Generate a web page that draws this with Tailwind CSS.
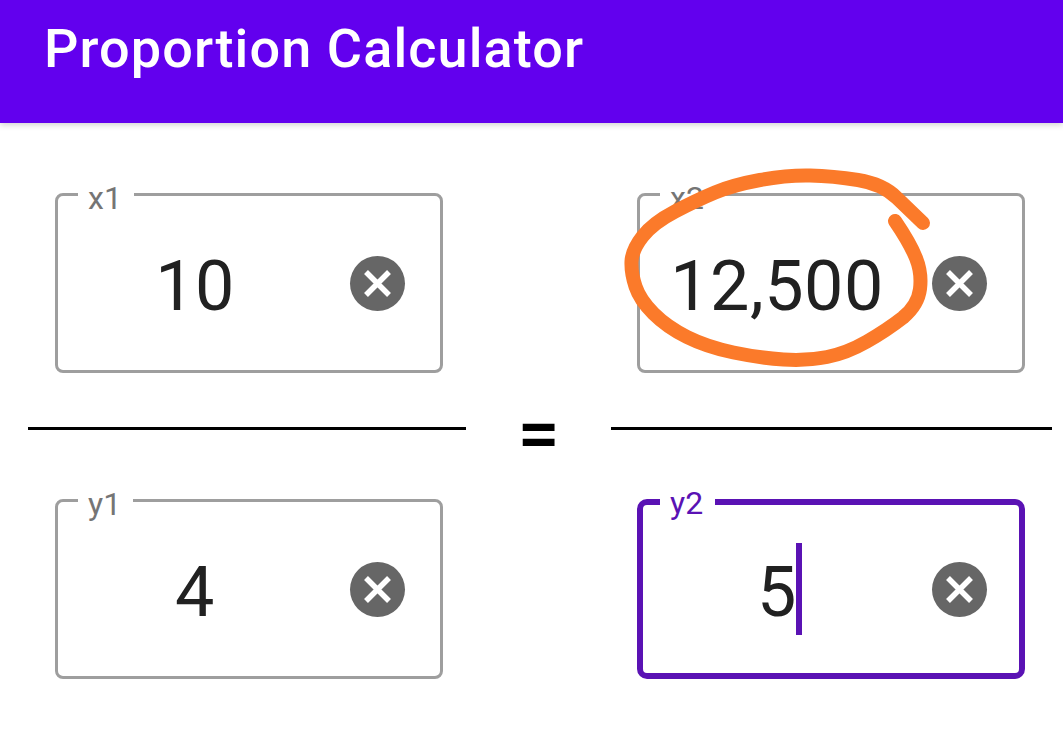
<!DOCTYPE html>
<html lang="en">
<head>
  <meta charset="UTF-8">
  <meta name="viewport" content="width=device-width, initial-scale=1.0">
  <title>Proportion Calculator</title>
  <script src="https://cdn.jsdelivr.net/npm/@tailwindcss/browser@4"></script>
</head>
<body class="bg-white font-['Roboto',sans-serif] overflow-hidden">
  <div class="relative w-[1063px] h-[756px] overflow-hidden">
    <header class="h-[123px] bg-[#6200ee] text-white flex items-center pl-[44px] pb-[25px] shadow-[0_2px_6px_rgba(0,0,0,0.18)]">
      <h1 class="text-[54px] leading-none font-medium tracking-[1.1px]">Proportion Calculator</h1>
    </header>

    <main class="grid grid-cols-[438px_145px_441px] pl-[28px] pt-[70px]">
      <!-- x1 -->
      <div class="pl-[27px]">
        <div class="relative w-[388px] h-[180px] border-[3px] border-[#9e9e9e] rounded-[8px] flex items-center">
          <span class="absolute left-[20px] top-[-13px] bg-white pl-[10px] pr-[12px] text-[32px] leading-[30px] text-[#757575]">x1</span>
          <div class="w-[274px] text-center text-[70px] tracking-[0.5px] leading-none text-[#212121] pt-[6px]">10</div>
          <button class="ml-[18px] w-[55px] h-[55px] rounded-full bg-[#666666] flex items-center justify-center">
            <svg width="29" height="29" viewBox="0 0 29 29" fill="none" stroke="white" stroke-width="5.5"><path d="M3 3 26 26M26 3 3 26"/></svg>
          </button>
        </div>
      </div>
      <div></div>
      <!-- x2 -->
      <div class="pl-[26px]">
        <div class="relative w-[388px] h-[180px] border-[3px] border-[#9e9e9e] rounded-[8px] flex items-center">
          <span class="absolute left-[20px] top-[-13px] bg-white pl-[10px] pr-[12px] text-[32px] leading-[30px] text-[#757575]">x2</span>
          <div class="w-[274px] text-center text-[70px] tracking-[0.5px] leading-none text-[#212121] pt-[6px]">12,500</div>
          <button class="ml-[18px] w-[55px] h-[55px] rounded-full bg-[#666666] flex items-center justify-center">
            <svg width="29" height="29" viewBox="0 0 29 29" fill="none" stroke="white" stroke-width="5.5"><path d="M3 3 26 26M26 3 3 26"/></svg>
          </button>
        </div>
      </div>

      <!-- fraction lines -->
      <div class="h-[3px] bg-black mt-[54px]"></div>
      <div class="mt-[54px] h-[3px] flex items-center justify-center">
        <span class="text-[75px] leading-none font-medium text-black pt-[9px]">=</span>
      </div>
      <div class="h-[3px] bg-black mt-[54px]"></div>

      <!-- y1 -->
      <div class="pl-[27px] mt-[69px]">
        <div class="relative w-[388px] h-[180px] border-[3px] border-[#9e9e9e] rounded-[8px] flex items-center">
          <span class="absolute left-[20px] top-[-13px] bg-white pl-[10px] pr-[12px] text-[32px] leading-[30px] text-[#757575]">y1</span>
          <div class="w-[274px] text-center text-[70px] tracking-[0.5px] leading-none text-[#212121] pt-[6px]">4</div>
          <button class="ml-[18px] w-[55px] h-[55px] rounded-full bg-[#666666] flex items-center justify-center">
            <svg width="29" height="29" viewBox="0 0 29 29" fill="none" stroke="white" stroke-width="5.5"><path d="M3 3 26 26M26 3 3 26"/></svg>
          </button>
        </div>
      </div>
      <div></div>
      <!-- y2, focused -->
      <div class="pl-[26px] mt-[69px]">
        <div class="relative w-[388px] h-[180px] border-[6px] border-[#5a12b4] rounded-[10px] flex items-center">
          <span class="absolute left-[17px] top-[-17px] bg-white pl-[10px] pr-[12px] text-[32px] leading-[30px] text-[#5a12b4]">y2</span>
          <div class="w-[268px] text-center text-[70px] tracking-[0.5px] leading-none text-[#212121] pt-[6px]">
            <span class="relative">5<span class="absolute left-[39px] top-[-8px] w-[6px] h-[92px] bg-[#5a12b4]"></span></span>
          </div>
          <button class="ml-[21px] w-[55px] h-[55px] rounded-full bg-[#666666] flex items-center justify-center">
            <svg width="29" height="29" viewBox="0 0 29 29" fill="none" stroke="white" stroke-width="5.5"><path d="M3 3 26 26M26 3 3 26"/></svg>
          </button>
        </div>
      </div>
    </main>

    <!-- hand drawn circle around the result -->
    <svg class="absolute inset-0 pointer-events-none" width="1063" height="756" viewBox="0 0 1063 756" fill="none">
      <path d="M923 223 L897 198 Q883 184 858 180 Q833 176 810 175.5 Q787 175 760 180 Q733 185 715 192.5 Q697 200 675 211.5 Q653 223 642.5 236.5 Q632 250 631.5 261.5 Q631 273 635.5 286.5 Q640 300 653.5 313.5 Q667 327 687 337 Q707 347 733.5 352.5 Q760 358 783.5 359.5 Q807 361 827 357 Q847 353 867 341.5 Q887 330 903 317.5 Q918 305 920 289 Q922 273 916 258 Q910 243 895 221" stroke="#fb7a2a" stroke-width="14" stroke-linecap="round" stroke-linejoin="round"/>
    </svg>
  </div>
</body>
</html>
